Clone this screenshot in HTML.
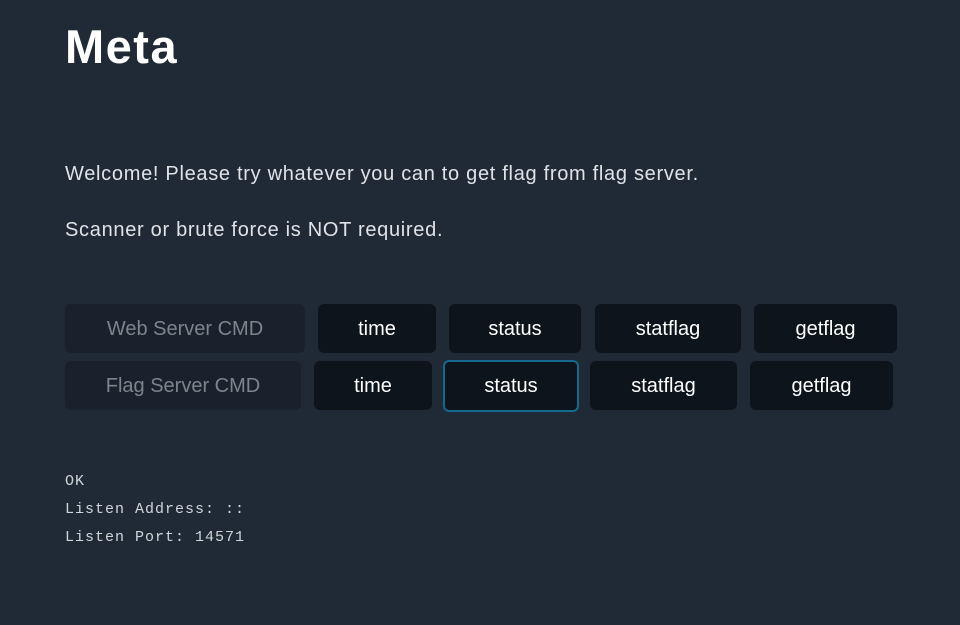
<!DOCTYPE html>
<html><head><style>
body{margin:0;width:960px;height:625px;background:#202a36;font-family:"Liberation Sans",sans-serif;color:#e4e8ec;position:relative;overflow:hidden}
h1{position:absolute;left:65px;top:19px;margin:0;font-size:47px;font-weight:bold;color:#fff;letter-spacing:1.5px}
p{position:absolute;left:65px;margin:0;font-size:20px;color:#dfe3e8;letter-spacing:0.7px;white-space:nowrap}
.b{position:absolute;height:49px;border-radius:6px;background:#0d141c;color:#fff;font-size:20px;display:flex;align-items:center;justify-content:center;box-sizing:border-box;padding-top:2px}
.l{background:#18212c;color:#7d848c}
.f{border:2px solid #136a8c;padding-top:0}
pre{position:absolute;left:65px;top:468px;margin:0;font-family:"Liberation Mono",monospace;font-size:15px;line-height:28px;color:#cfd5db;letter-spacing:1px}
</style></head><body>
<h1>Meta</h1>
<p style="top:163px">Welcome! Please try whatever you can to get flag from flag server.</p>
<p style="top:219px">Scanner or brute force is NOT required.</p>
<div class="b l" style="left:65px;top:304px;width:240px">Web Server CMD</div>
<div class="b" style="left:318px;top:304px;width:118px">time</div>
<div class="b" style="left:449px;top:304px;width:132px">status</div>
<div class="b" style="left:595px;top:304px;width:146px">statflag</div>
<div class="b" style="left:754px;top:304px;width:143px">getflag</div>
<div class="b l" style="left:65px;top:361px;width:236px">Flag Server CMD</div>
<div class="b" style="left:314px;top:361px;width:118px">time</div>
<div class="b f" style="left:443px;top:360px;width:136px;height:52px">status</div>
<div class="b" style="left:590px;top:361px;width:147px">statflag</div>
<div class="b" style="left:750px;top:361px;width:143px">getflag</div>
<pre>OK
Listen Address: ::
Listen Port: 14571</pre>
</body></html>
